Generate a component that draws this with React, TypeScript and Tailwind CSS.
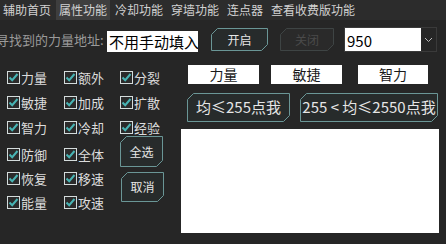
import React from "react";

const font = { fontFamily: '"Noto Sans CJK SC", "Noto Sans", sans-serif' };

const tabs = ["辅助首页", "属性功能", "冷却功能", "穿墙功能", "连点器", "查看收费版功能"];

const Chamfer: React.FC<{ w: number; h: number; dim?: boolean; className: string; children?: React.ReactNode }> = ({ w, h, dim, className, children }) => {
  const c = 6;
  const pts = `${c + 0.5},0.5 ${w - 0.5},0.5 ${w - 0.5},${h - c - 0.5} ${w - c - 0.5},${h - 0.5} 0.5,${h - 0.5} 0.5,${c + 0.5}`;
  return (
    <div className={`relative flex items-center justify-center shrink-0 ${className}`}>
      <svg width={w} height={h} className="absolute left-0 top-0">
        <polygon points={pts} fill={dim ? "#2a2a2a" : "#272b2b"} stroke={dim ? "#3e4444" : "#6a9696"} strokeWidth="1" />
      </svg>
      <span className={`relative ${dim ? "text-[#4a4a4a]" : "text-[#e6e6e6]"}`}>{children}</span>
    </div>
  );
};

const Check: React.FC<{ label: string }> = ({ label }) => (
  <div className="flex items-center gap-[1px] h-[20px]">
    <svg width="13" height="13" className="shrink-0">
      <rect x="0.5" y="0.5" width="12" height="12" fill="#2b2b2b" stroke="#d4dcdc" strokeWidth="1" />
      <path d="M2.5 6.5 L5.2 9.2 L10.5 3" fill="none" stroke="#48b4b4" strokeWidth="2" />
    </svg>
    <span className="text-[13px] text-[#dcdcdc] leading-none">{label}</span>
  </div>
);

export default function App() {
  return (
    <div className="w-[446px] h-[244px] bg-[#262626] overflow-hidden" style={font}>
      <div className="flex h-[20px] bg-[#2c2c2c] text-[12px] text-[#d2d2d2] leading-[20px]">
        {tabs.map((t, i) => (
          <div key={t} className={`px-[3px] mr-[2px] ${i === 1 ? "bg-[#3e3e3e]" : ""}`}>
            {t}
          </div>
        ))}
      </div>

      <div className="flex items-center h-[33px] mt-[3px]">
        <div className="text-[13px] text-[#9a9a9a] ml-[-4px] w-[111px] whitespace-nowrap">寻找到的力量地址:</div>
        <div className="w-[91px] h-[21px] bg-white text-black text-[15px] leading-[21px] pl-[2px] mt-[4px] whitespace-nowrap overflow-hidden">不用手动填入</div>
        <Chamfer w={57} h={23} className="w-[57px] h-[23px] ml-[13px] text-[12px]">开启</Chamfer>
        <Chamfer w={54} h={23} dim className="w-[54px] h-[23px] ml-[12px] text-[12px]">关闭</Chamfer>
        <div className="flex items-stretch ml-[10px] h-[25px] border border-[#3a3a3a] bg-[#262626]">
          <div className="w-[76px] bg-white text-black text-[15px] leading-[25px] pl-[2px]">950</div>
          <div className="w-[15px] flex items-center justify-center">
            <svg width="9" height="6"><path d="M1 1 L4.5 4.5 L8 1" fill="none" stroke="#bbbbbb" strokeWidth="1" /></svg>
          </div>
        </div>
      </div>

      <div className="flex mt-[8px]">
        <div className="w-[181px] shrink-0 pl-[7px] pt-[3px]">
          <div className="grid grid-cols-[57px_56px_56px] gap-y-[5px]">
            <Check label="力量" />
            <Check label="额外" />
            <Check label="分裂" />
            <Check label="敏捷" />
            <Check label="加成" />
            <Check label="扩散" />
            <Check label="智力" />
            <Check label="冷却" />
            <Check label="经验" />
          </div>
          <div className="flex">
            <div className="grid grid-cols-[57px_56px] content-start gap-y-[4px] mt-[7px]">
              <Check label="防御" />
              <Check label="全体" />
              <Check label="恢复" />
              <Check label="移速" />
              <Check label="能量" />
              <Check label="攻速" />
            </div>
            <div className="flex flex-col gap-[5px] mt-[-1px]">
              <Chamfer w={43} h={31} className="w-[43px] h-[31px] text-[12px]">全选</Chamfer>
              <Chamfer w={43} h={30} className="w-[43px] h-[30px] ml-[1px] text-[12px]">取消</Chamfer>
            </div>
          </div>
        </div>

        <div className="flex flex-col">
          <div className="flex pl-[7px] mt-[1px]">
            <div className="w-[71px] h-[19px] bg-white text-[#1a1a1a] text-[14px] leading-[19px] text-center">力量</div>
            <div className="w-[71px] h-[19px] bg-white text-[#1a1a1a] text-[14px] leading-[19px] text-center ml-[12px]">敏捷</div>
            <div className="w-[70px] h-[19px] bg-white text-[#1a1a1a] text-[14px] leading-[19px] text-center ml-[16px]">智力</div>
          </div>
          <div className="flex pl-[6px] mt-[9px]">
            <Chamfer w={103} h={29} className="w-[103px] h-[29px] text-[15px]">均≤255点我</Chamfer>
            <Chamfer w={138} h={29} className="w-[138px] h-[29px] ml-[10px] text-[15px]">255 &lt; 均≤2550点我</Chamfer>
          </div>
          <div className="w-[258px] h-[104px] bg-white mt-[7px]" />
        </div>
      </div>
    </div>
  );
}
